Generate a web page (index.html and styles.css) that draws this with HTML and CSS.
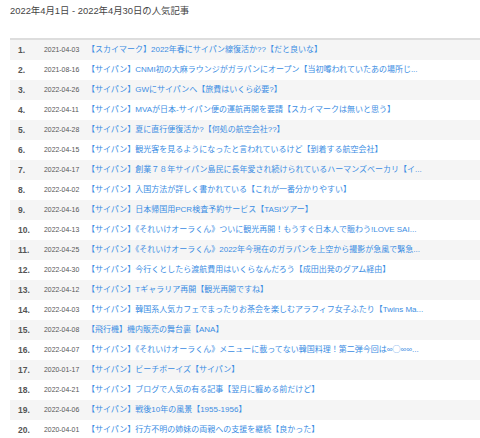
FILE: index.html
```html
<!DOCTYPE html>
<html lang="ja">
<head>
<meta charset="utf-8">
<link rel="stylesheet" href="styles.css">
</head>
<body>
<h1 class="title">2022年4月1日 - 2022年4月30日の人気記事</h1>
<table class="ranking">
<tbody>
<tr><td class="rank">1.</td><td class="date">2021-04-03</td><td class="link"><a href="#">【スカイマーク】2022年春にサイパン線復活か??【だと良いな】</a></td></tr>
<tr><td class="rank">2.</td><td class="date">2021-08-16</td><td class="link"><a href="#">【サイパン】CNMI初の大麻ラウンジがガラパンにオープン【当初噂われていたあの場所じ...</a></td></tr>
<tr><td class="rank">3.</td><td class="date">2022-04-26</td><td class="link"><a href="#">【サイパン】GWにサイパンへ【旅費はいくら必要?】</a></td></tr>
<tr><td class="rank">4.</td><td class="date">2022-04-11</td><td class="link"><a href="#">【サイパン】MVAが日本-サイパン便の運航再開を要請【スカイマークは無いと思う】</a></td></tr>
<tr><td class="rank">5.</td><td class="date">2022-04-28</td><td class="link"><a href="#">【サイパン】夏に直行便復活か?【何処の航空会社??】</a></td></tr>
<tr><td class="rank">6.</td><td class="date">2022-04-15</td><td class="link"><a href="#">【サイパン】観光客を見るようになったと言われているけど【到着する航空会社】</a></td></tr>
<tr><td class="rank">7.</td><td class="date">2022-04-17</td><td class="link"><a href="#">【サイパン】創業７８年サイパン島民に長年愛され続けられているハーマンズベーカリ【イ...</a></td></tr>
<tr><td class="rank">8.</td><td class="date">2022-04-02</td><td class="link"><a href="#">【サイパン】入国方法が詳しく書かれている【これが一番分かりやすい】</a></td></tr>
<tr><td class="rank">9.</td><td class="date">2022-04-16</td><td class="link"><a href="#">【サイパン】日本帰国用PCR検査予約サービス【TASIツアー】</a></td></tr>
<tr><td class="rank">10.</td><td class="date">2022-04-13</td><td class="link"><a href="#">【サイパン】《それいけオーラくん》ついに観光再開！もうすぐ日本人で賑わう!LOVE SAI...</a></td></tr>
<tr><td class="rank">11.</td><td class="date">2022-04-25</td><td class="link"><a href="#">【サイパン】《それいけオーラくん》2022年今現在のガラパンを上空から撮影が急風で緊急...</a></td></tr>
<tr><td class="rank">12.</td><td class="date">2022-04-30</td><td class="link"><a href="#">【サイパン】今行くとしたら渡航費用はいくらなんだろう【成田出発のグアム経由】</a></td></tr>
<tr><td class="rank">13.</td><td class="date">2022-04-12</td><td class="link"><a href="#">【サイパン】Tギャラリア再開【観光再開ですね】</a></td></tr>
<tr><td class="rank">14.</td><td class="date">2022-04-03</td><td class="link"><a href="#">【サイパン】韓国系人気カフェでまったりお茶会を楽しむアラフィフ女子ふたり【Twins Ma...</a></td></tr>
<tr><td class="rank">15.</td><td class="date">2022-04-08</td><td class="link"><a href="#">【飛行機】機内販売の舞台裏【ANA】</a></td></tr>
<tr><td class="rank">16.</td><td class="date">2022-04-07</td><td class="link"><a href="#">【サイパン】《それいけオーラくん》メニューに載ってない韓国料理！第二弾今回は∞◯∞∞...</a></td></tr>
<tr><td class="rank">17.</td><td class="date">2020-01-17</td><td class="link"><a href="#">【サイパン】ビーチボーイズ【サイパン】</a></td></tr>
<tr><td class="rank">18.</td><td class="date">2022-04-21</td><td class="link"><a href="#">【サイパン】ブログで人気の有る記事【翌月に纏める前だけど】</a></td></tr>
<tr><td class="rank">19.</td><td class="date">2022-04-06</td><td class="link"><a href="#">【サイパン】戦後10年の風景【1955-1956】</a></td></tr>
<tr><td class="rank">20.</td><td class="date">2020-04-01</td><td class="link"><a href="#">【サイパン】行方不明の姉妹の両親への支援を継続【良かった】</a></td></tr>
</tbody>
</table>
</body>
</html>
```

FILE: styles.css
```css
html, body {
  margin: 0;
  padding: 0;
  background: #ffffff;
}
body {
  padding: 6px 0 0 10px;
  font-family: "Liberation Sans", "Noto Sans CJK JP", sans-serif;
  color: #555555;
  overflow: hidden;
}
.title {
  margin: 0 0 22px 0;
  font-size: 9.4px;
  font-weight: normal;
  line-height: 10px;
  color: #444444;
}
.ranking {
  border-collapse: collapse;
  border-top: 2px solid #dddddd;
  width: 470px;
}
.ranking tr:nth-child(odd) {
  background: #f5f5f5;
}
.ranking tr:last-child {
  border-bottom: 1px solid #e4e4e4;
}
.ranking td {
  padding: 0;
  height: 20px;
  line-height: 20px;
  white-space: nowrap;
}
.ranking td.rank {
  width: 26px;
  padding-left: 8px;
  font-size: 8.5px;
  font-weight: bold;
  color: #555555;
}
.date {
  width: 43px;
  font-size: 6.9px;
  color: #555555;
}
.link {
  font-size: 8px;
}
.link a {
  color: #3b8de3;
  text-decoration: none;
}
```
